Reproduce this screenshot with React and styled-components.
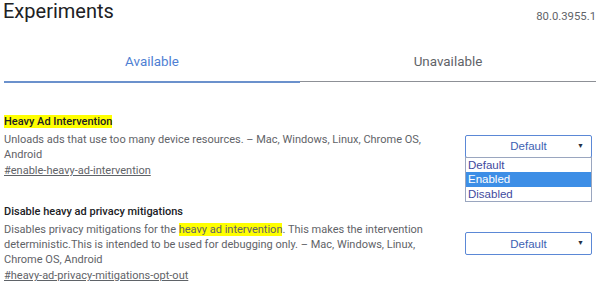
import React from "react";
import styled, { createGlobalStyle } from "styled-components";

const GlobalStyle = createGlobalStyle`
  html, body {
    margin: 0;
    padding: 0;
    background: #ffffff;
  }
  body {
    font-family: Roboto, "Liberation Sans", Arial, sans-serif;
    color: #202124;
  }
`;

const Page = styled.div`
  width: 600px;
  height: 285px;
  overflow: hidden;
  padding: 0 4px;
  box-sizing: border-box;
`;

const Header = styled.header`
  display: flex;
  justify-content: space-between;
  align-items: flex-start;
  height: 30px;
`;

const Title = styled.h1`
  margin: 0 0 0 -1px;
  font-size: 20px;
  font-weight: 400;
  line-height: 23px;
  color: #202124;
`;

const Version = styled.span`
  margin-top: 10px;
  font-size: 11.3px;
  line-height: 13px;
  color: #5f6368;
`;

const Tabs = styled.nav`
  display: flex;
`;

const Tab = styled.div`
  flex: 1;
  text-align: center;
  padding: 24px 0 11px;
  font-size: 13.4px;
  line-height: 16px;
  color: ${(p) => (p.$active ? "#4f7fd3" : "#5f6368")};
  border-bottom: ${(p) => (p.$active ? "2px solid #6b91cc" : "1px solid #8d9096")};
  margin-bottom: ${(p) => (p.$active ? "0" : "1px")};
`;

const List = styled.div`
  display: flex;
  flex-direction: column;
  gap: 26px;
  padding-top: 31px;
`;

const Row = styled.div`
  display: flex;
  align-items: center;
  justify-content: space-between;
`;

const Text = styled.div`
  width: 436px;
  font-size: 11px;
  line-height: 15px;
`;

const Name = styled.div`
  font-weight: 500;
  color: #202124;
  margin-bottom: 3px;
`;

const Desc = styled.div`
  color: #5f6368;
`;

const Mark = styled.mark`
  background: #ffff00;
  color: inherit;
`;

const Link = styled.a`
  display: block;
  margin-top: 1px;
  color: #5f6368;
  text-decoration: underline;
`;

const Control = styled.div`
  position: relative;
  width: 127px;
  margin-right: 4px;
`;

const Select = styled.div`
  position: relative;
  height: 23px;
  box-sizing: border-box;
  border: 1px solid #5b88d6;
  border-radius: 2px;
  background: #ffffff;
  display: flex;
  align-items: center;
  justify-content: center;
  font-family: "Liberation Sans", Arial, sans-serif;
  font-size: 11.5px;
  color: #3d62b3;
`;

const Arrow = styled.span`
  position: absolute;
  right: 7px;
  top: 6px;
  font-size: 7px;
  color: #263044;
`;

const Menu = styled.ul`
  position: absolute;
  left: 0;
  right: 0;
  top: 22px;
  margin: 0;
  padding: 0;
  list-style: none;
  background: #ffffff;
  border: 1px solid #9aa6bf;
  font-family: "Liberation Sans", Arial, sans-serif;
  font-size: 11.5px;
  z-index: 2;
`;

const Option = styled.li`
  height: 14.5px;
  line-height: 14.5px;
  padding-left: 2px;
  color: ${(p) => (p.$selected ? "#ffffff" : "#3f4a9e")};
  background: ${(p) => (p.$selected ? "#3d8ee6" : "transparent")};
`;

const Dropdown = ({ open }) => (
  <Control>
    <Select>
      Default
      <Arrow>▼</Arrow>
    </Select>
    {open && (
      <Menu>
        <Option>Default</Option>
        <Option $selected>Enabled</Option>
        <Option>Disabled</Option>
      </Menu>
    )}
  </Control>
);

export default function App() {
  return (
    <Page>
      <GlobalStyle />
      <Header>
        <Title>Experiments</Title>
        <Version>80.0.3955.1</Version>
      </Header>
      <Tabs>
        <Tab $active>Available</Tab>
        <Tab>Unavailable</Tab>
      </Tabs>
      <List>
        <Row>
          <Text>
            <Name>
              <Mark>Heavy Ad Intervention</Mark>
            </Name>
            <Desc>
              Unloads ads that use too many device resources. – Mac, Windows,
              Linux, Chrome OS, Android
            </Desc>
            <Link>#enable-heavy-ad-intervention</Link>
          </Text>
          <Dropdown open />
        </Row>
        <Row>
          <Text>
            <Name>Disable heavy ad privacy mitigations</Name>
            <Desc>
              Disables privacy mitigations for the <Mark>heavy ad intervention</Mark>.
              This makes the intervention deterministic.This is intended to be
              used for debugging only. – Mac, Windows, Linux, Chrome OS, Android
            </Desc>
            <Link>#heavy-ad-privacy-mitigations-opt-out</Link>
          </Text>
          <Dropdown />
        </Row>
      </List>
    </Page>
  );
}
